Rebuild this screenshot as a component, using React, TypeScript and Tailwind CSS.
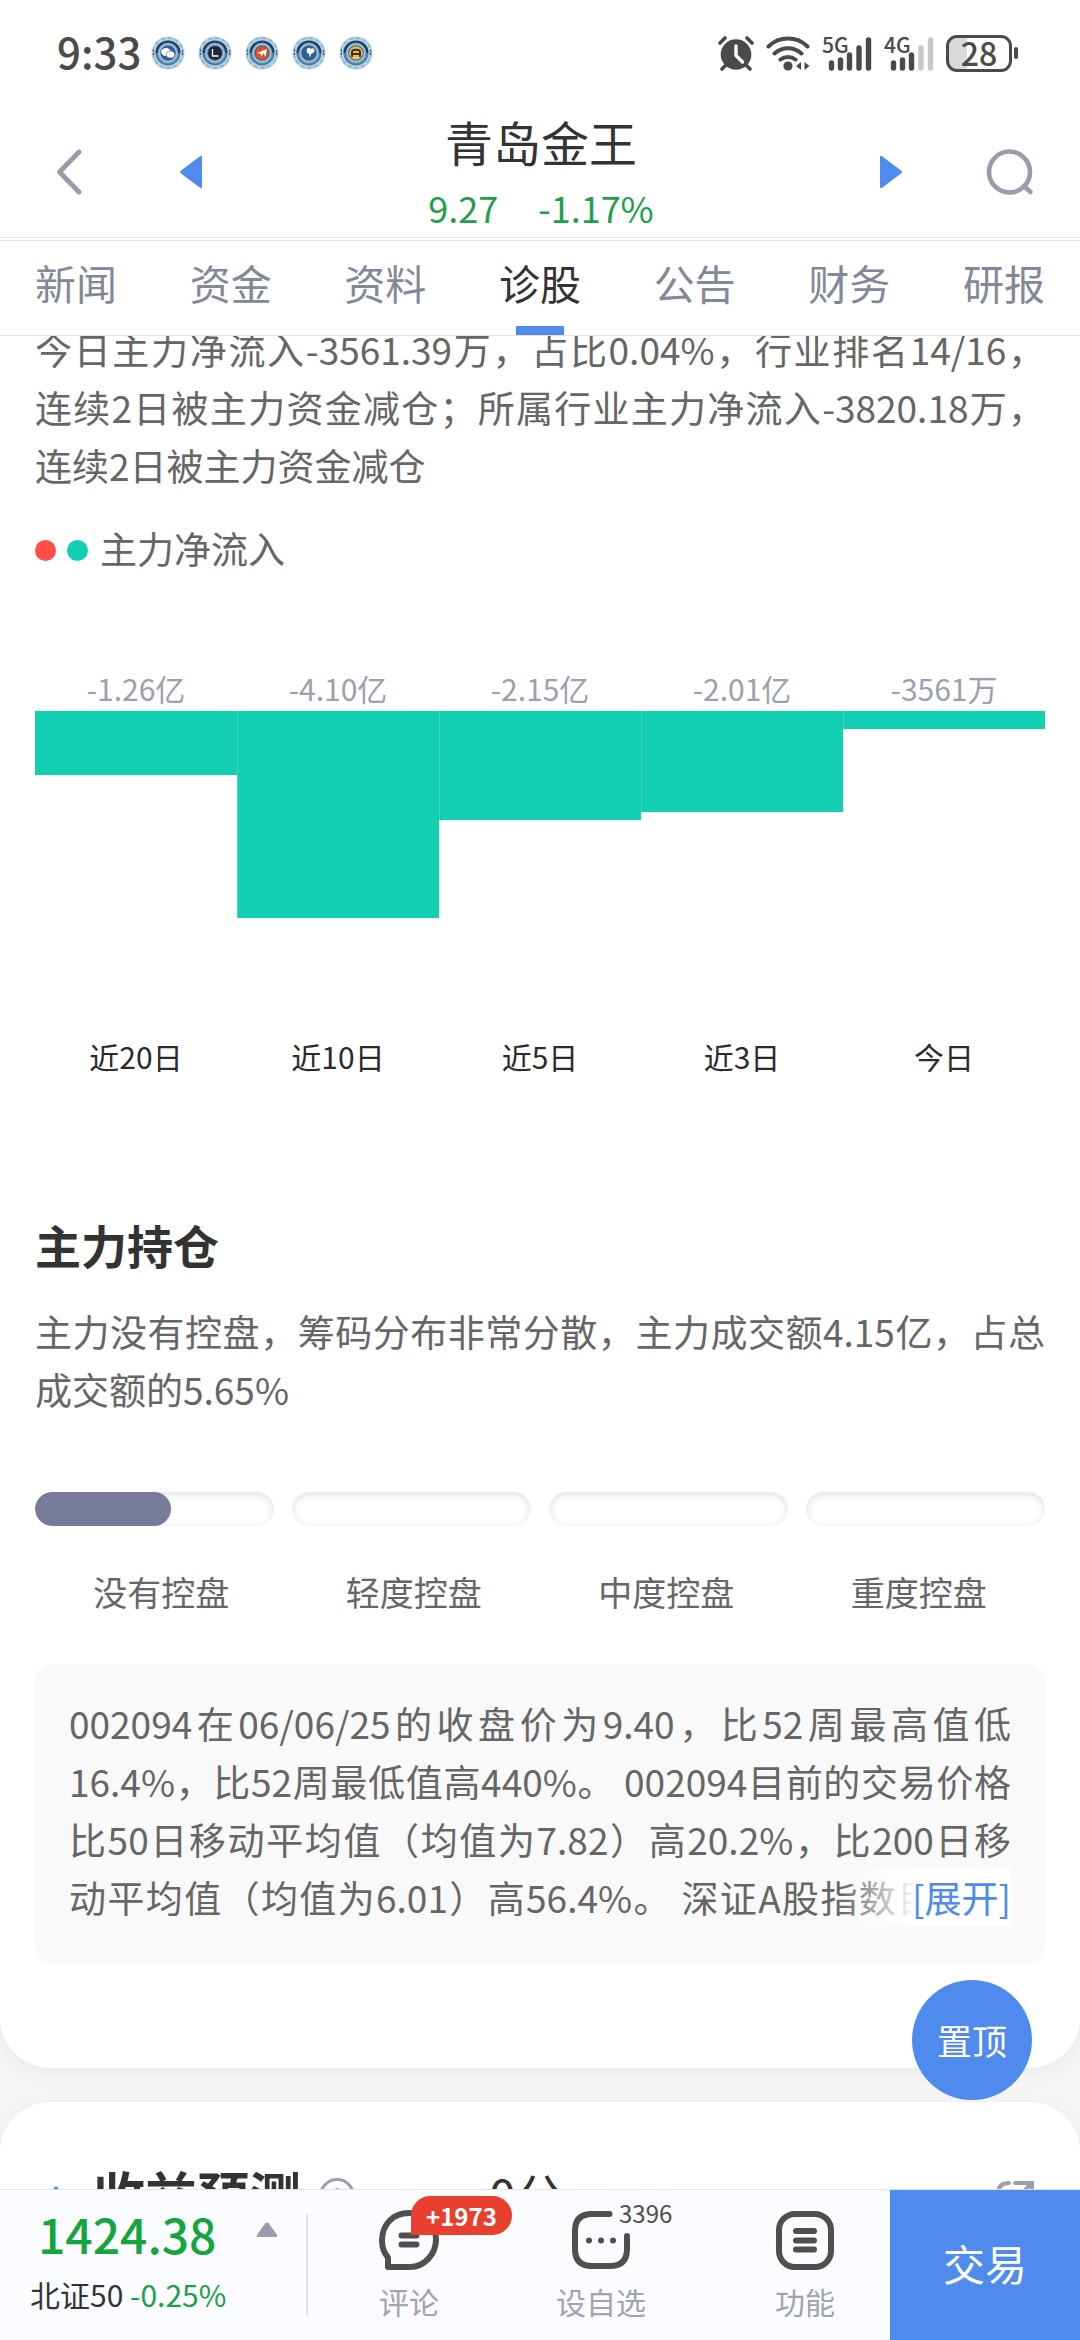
import React from 'react';

interface Flow {
  label: string;
  value: number;
  text: string;
}

const TABS = ['新闻', '资金', '资料', '诊股', '公告', '财务', '研报'];
const ACTIVE_TAB = '诊股';

// 单位：亿
const FLOWS: Flow[] = [
  { label: '近20日', value: -1.26, text: '-1.26亿' },
  { label: '近10日', value: -4.1, text: '-4.10亿' },
  { label: '近5日', value: -2.15, text: '-2.15亿' },
  { label: '近3日', value: -2.01, text: '-2.01亿' },
  { label: '今日', value: -0.3561, text: '-3561万' },
];
const BAR_MAX = 207;

const LEVELS = [
  { label: '没有控盘', percent: 57 },
  { label: '轻度控盘', percent: 0 },
  { label: '中度控盘', percent: 0 },
  { label: '重度控盘', percent: 0 },
];

const AppBadge: React.FC<{ core: string; children: React.ReactNode }> = ({ core, children }) => (
  <svg viewBox="0 0 34 34" className="size-[34px]">
    <circle cx="17" cy="17" r="16.5" fill="#b4d3e1" />
    <circle cx="17" cy="17" r="15" fill="none" stroke="#8bb2c8" strokeWidth="1.5" strokeDasharray="4 3" />
    <circle cx="17" cy="17" r="12" fill="#7ba5c2" />
    <path d="M5.500 17a11.500 11.500 0 0 1 23 0" fill="none" stroke="#1d3b63" strokeWidth="2.200" />
    <path d="M5.500 17a11.500 11.500 0 0 0 23 0" fill="none" stroke="#4d7ba3" strokeWidth="2" />
    <path d="M2.500 14v5M31.500 14v5" stroke="#1d3557" strokeWidth="1.200" strokeDasharray="1.500 1.500" />
    <circle cx="17" cy="17" r="8.500" fill="#365f8c" stroke="#a5c4d8" strokeWidth="1.500" />
    <circle cx="17" cy="17" r="6.800" fill={core} />
    {children}
  </svg>
);

const StatusBar = () => (
  <div className="flex h-[106px] items-center justify-between pr-[62px] pl-[57px] text-[#4a4a4a]">
    <div className="flex items-center gap-[10px]">
      <span className="pb-1 text-[42px] leading-[50px] font-medium">9:33</span>
      <div className="flex gap-[13px]">
        <AppBadge core="#2c5f94">
          <ellipse cx="15" cy="16" rx="4.800" ry="4" fill="#fff" />
          <ellipse cx="19.500" cy="18.500" rx="4.200" ry="3.500" fill="#fff" stroke="#2c5f94" strokeWidth="0.600" />
        </AppBadge>
        <AppBadge core="#22283a">
          <path d="M14.500 13v7h6" fill="none" stroke="#fff" strokeWidth="1.300" />
        </AppBadge>
        <AppBadge core="#dd4f22">
          <path d="M12 17l10-4-1.500 8-2-4-2.500 4v-3z" fill="#fff" />
        </AppBadge>
        <AppBadge core="#2c5f94">
          <path d="M15 13c1-2 2.500-1 3.500 0 1-1.500 4-1 4 1.500 0 2-2 3-3.500 3.500L18 22l-1-4c-2-.5-3-3-2-5z" fill="#fff" />
        </AppBadge>
        <AppBadge core="#f0bd45">
          <path d="M13 21v-5c0-3 8-3 8 0v5M12 18h10" fill="none" stroke="#33291a" strokeWidth="1.800" />
        </AppBadge>
      </div>
    </div>
    <div className="flex items-center gap-3">
      <svg viewBox="0 0 36 36" className="size-9">
        <circle cx="18" cy="19.500" r="15.300" fill="currentColor" />
        <path d="M2 8l5-5M34 8l-5-5M8 30l-4 4M28 30l4 4" stroke="currentColor" strokeWidth="3.600" strokeLinecap="round" />
        <path d="M18 11v9.500l6.500 6.500" fill="none" stroke="#fff" strokeWidth="3.400" strokeLinecap="round" strokeLinejoin="round" />
      </svg>
      <svg viewBox="0 0 44 36" className="h-9 w-11">
        <path d="M2.500 11.500a28 28 0 0 1 39 0M8.500 18.500a20 20 0 0 1 27 0M14.500 24.500a12.500 12.500 0 0 1 15 0" fill="none" stroke="currentColor" strokeWidth="4" strokeLinecap="round" />
        <circle cx="22" cy="31" r="4.600" fill="currentColor" />
        <path d="M35 27v8l-5-4zM38.500 27v8l5-4z" fill="currentColor" />
      </svg>
      <div className="relative h-9 w-[50px]">
        <span className="absolute -top-px left-0 text-[21px] leading-[20px] font-medium">5G</span>
        <svg viewBox="0 0 50 36" className="size-full">
          <path d="M9.500 28v5M18.500 25v8M27.500 20v13M37 13v20M46.500 5v28" stroke="currentColor" strokeWidth="5.400" strokeLinecap="round" />
        </svg>
      </div>
      <div className="relative h-9 w-[50px]">
        <span className="absolute -top-px left-0 text-[21px] leading-[20px] font-medium">4G</span>
        <svg viewBox="0 0 50 36" className="size-full">
          <path d="M9.500 28v5M18.500 25v8M27.500 20v13" stroke="currentColor" strokeWidth="5.400" strokeLinecap="round" />
          <path d="M37 13v20M46.500 5v28" stroke="#c8c8c8" strokeWidth="5.400" strokeLinecap="round" />
        </svg>
      </div>
      <div className="flex items-center gap-[2px]">
        <div className="flex h-[37px] w-[66px] items-center justify-center rounded-[11px] border-[3px] border-[#4a4a4a] bg-linear-to-r from-[#d9d9d9] from-30% to-white to-30% pb-[3px] text-[32px] leading-[32px] font-medium">
          28
        </div>
        <div className="h-3 w-1 rounded-sm bg-[#4a4a4a]" />
      </div>
    </div>
  </div>
);

const StockHeader = () => (
  <div className="flex h-[131px] items-center justify-between pr-[46px] pl-[53px]">
    <div className="flex items-center gap-[96px]">
      <button aria-label="返回">
        <svg viewBox="0 0 30 48" className="h-12 w-[30px]" fill="none" stroke="#9b9ca9" strokeWidth="5" strokeLinecap="round" strokeLinejoin="round">
          <path d="M26 4L6.500 24 26 44" />
        </svg>
      </button>
      <button aria-label="上一只">
        <svg viewBox="0 0 24 34" className="h-[34px] w-6" fill="#4f8bec">
          <path d="M21 1.200Q23 0 23 2.500v29Q23 34 21 32.800L2 18.500Q0 17 2 15.500z" />
        </svg>
      </button>
    </div>
    <div className="flex flex-col items-center gap-4 pb-[2px]">
      <h1 className="text-[48px] leading-[56px] text-[#333]">青岛金王</h1>
      <p className="flex gap-10 text-[36px] leading-[44px] text-[#1ea04a]">
        <span>9.27</span>
        <span>-1.17%</span>
      </p>
    </div>
    <div className="flex items-center gap-[83px]">
      <button aria-label="下一只">
        <svg viewBox="0 0 24 34" className="h-[34px] w-6" fill="#4f8bec">
          <path d="M3 1.200Q1 0 1 2.500v29Q1 34 3 32.800L22 18.500Q24 17 22 15.500z" />
        </svg>
      </button>
      <button aria-label="搜索">
        <svg viewBox="0 0 48 48" className="size-12" fill="none" stroke="#9b9ca9" strokeWidth="4.600">
          <circle cx="23.500" cy="24" r="20.500" />
          <path d="M38 38l6.500 6" strokeLinecap="round" />
        </svg>
      </button>
    </div>
  </div>
);

const TabBar = () => (
  <nav className="flex h-24 justify-between border-y border-[#e4e4e6] px-[35px]">
    {TABS.map((tab) => (
      <button
        key={tab}
        className={`relative pb-3 text-[41px] leading-[60px] ${tab === ACTIVE_TAB ? 'text-[#333]' : 'text-[#838898]'}`}
      >
        {tab}
        {tab === ACTIVE_TAB && <span className="absolute bottom-0 left-1/2 h-[9px] w-12 -translate-x-1/2 bg-[#4f8bec]" />}
      </button>
    ))}
  </nav>
);

const FlowChart = () => (
  <div className="mt-[91px] flex">
    {FLOWS.map((flow, i) => (
      <div key={flow.label} className="flex-1 text-center text-[30px] leading-10">
        <div className="pb-[3px] text-[#9b9fae]">{flow.text}</div>
        <div className="h-[325px]">
          <div
            className={i > 0 ? 'border-l border-[#3ad8bf] bg-[#12d0b1]' : 'bg-[#12d0b1]'}
            style={{ height: Math.round((Math.abs(flow.value) / 4.1) * BAR_MAX) }}
          />
        </div>
        <div className="text-[#2b2b2b]">{flow.label}</div>
      </div>
    ))}
  </div>
);

const ControlLevels = () => (
  <>
    <div className="mt-[74px] grid grid-cols-4 gap-[18px]">
      {LEVELS.map((level) => (
        <div key={level.label} className="h-[34px] overflow-hidden rounded-full bg-white shadow-[inset_0_2px_8px_rgba(0,0,0,0.13)]">
          <div className="h-full rounded-full bg-[#757b98]" style={{ width: `${level.percent}%` }} />
        </div>
      ))}
    </div>
    <div className="mt-[42px] grid grid-cols-4 text-center text-[34px] leading-[48px] text-[#666]">
      {LEVELS.map((level) => (
        <span key={level.label}>{level.label}</span>
      ))}
    </div>
  </>
);

const BottomBar = () => (
  <footer className="flex h-[151px] shrink-0 border-t border-[#dfe2e8] bg-[#fbfcff]">
    <div className="my-6 flex w-[308px] flex-col justify-between border-r-2 border-[#e3e4ea] pl-[30px]">
      <div className="flex items-start gap-10 pl-2">
        <span className="text-[48px] leading-[38px] font-medium text-[#14a53e]">1424.38</span>
        <svg viewBox="0 0 22 16" className="mt-2 h-4 w-[22px]" fill="#9b9bab">
          <path d="M9.500 1.200q1.500-1.500 3 0l8.500 11.500q1 2.300-1 2.300H2q-2 0-1-2.300z" />
        </svg>
      </div>
      <p className="text-[30px] leading-[44px] text-[#333]">
        北证50 <span className="text-[#1ea04a]">-0.25%</span>
      </p>
    </div>
    <div className="grid flex-1 grid-cols-[202fr_182fr_198fr] pt-5 text-[30px] leading-[38px] text-[#a0a3b0]">
      <button className="flex flex-col items-center gap-3">
        <span className="relative">
          <svg viewBox="0 0 60 60" className="size-[60px]" fill="none" stroke="#4f4f4f" strokeWidth="6" strokeLinejoin="round">
            <path d="M9 57V47.500C5 43 3 37 3 30.500 3 14.500 14 3 30 3s27 11.500 27 26.500S45 57 31 57z" />
            <path d="M22.500 25.500h15M22.500 34.500h15" strokeLinecap="round" />
          </svg>
          <span className="absolute -top-[14px] left-8 rounded-t-full rounded-r-full rounded-bl-none bg-[#e93f2e] px-[15px] text-[24px] leading-[39px] font-bold text-white">
            +1973
          </span>
        </span>
        评论
      </button>
      <button className="flex flex-col items-center gap-3">
        <span className="relative">
          <svg viewBox="0 0 60 60" className="size-[60px]" fill="none" stroke="#4f4f4f" strokeWidth="6" strokeLinecap="round">
            <path d="M38.500 4H21Q4 4 4 21v18q0 17 17 17h18q17 0 17-17V26" />
            <path d="M18 30.500h.01M30 30.500h.01M42 30.500h.01" />
          </svg>
          <span className="absolute -top-[9px] left-12 text-[24px] leading-[24px] text-[#4f4f4f]">3396</span>
        </span>
        设自选
      </button>
      <button className="flex flex-col items-center gap-3 pl-7">
        <svg viewBox="0 0 60 60" className="size-[60px]" fill="none" stroke="#4f4f4f" strokeWidth="6" strokeLinecap="round">
          <rect x="4" y="4" width="52" height="53" rx="16" />
          <path d="M21 21h18M21 30.500h18M21 39.500h18" />
        </svg>
        功能
      </button>
    </div>
    <button className="w-[190px] bg-[#4f8bec] pb-[6px] text-[42px] text-white">交易</button>
  </footer>
);

export default function App() {
  return (
    <div lang="zh-CN" className="flex h-screen flex-col bg-white font-['Noto_Sans_CJK_SC',sans-serif]">
      <header className="shrink-0">
        <StatusBar />
        <StockHeader />
        <div className="h-[3px] border-t border-[#e4e4e6]" />
        <TabBar />
      </header>

      <main className="flex-1 overflow-y-auto bg-[#f6f6f6] [scrollbar-width:none]">
        <section className="flow-root rounded-b-[50px] bg-white px-[35px] pb-[104px] shadow-[0_4px_20px_rgba(0,0,0,0.06)]">
          <p className="-mt-4 text-justify text-[37px] leading-[58px] text-[#666]">
            今日主力净流入-3561.39万，占比0.04%，行业排名14/16，连续2日被主力资金减仓；所属行业主力净流入-3820.18万，连续2日被主力资金减仓
          </p>

          <div className="mt-[25px] flex items-center text-[37px] leading-[58px] text-[#666]">
            <span className="mt-1 mr-[11px] size-[21px] rounded-full bg-[#ff4e47]" />
            <span className="mt-1 mr-3 size-[21px] rounded-full bg-[#12d0b1]" />
            主力净流入
          </div>
          <FlowChart />

          <h2 className="mt-[138px] text-[46px] leading-[60px] font-bold text-[#333]">主力持仓</h2>
          <p className="mt-7 text-justify text-[37px] leading-[58px] text-[#666]">
            主力没有控盘，筹码分布非常分散，主力成交额4.15亿，占总成交额的5.65%
          </p>
          <ControlLevels />

          <div className="mt-12 rounded-[18px] bg-[#f9f9f9] px-[34px] pt-[30px] pb-[38px]">
            <div className="relative">
              <p className="text-justify text-[37px] leading-[58px] text-[#666] [text-align-last:justify]">
                002094在06/06/25的收盘价为9.40，比52周最高值低16.4%，比52周最低值高440%。 002094目前的交易价格比50日移动平均值（均值为7.82）高20.2%，比200日移动平均值（均值为6.01）高56.4%。 深证A股指数目前的
              </p>
              <button className="absolute right-0 bottom-0 bg-linear-to-r from-white/0 to-white to-45% pl-[72px] text-[37px] leading-[58px] text-[#4f8bec]">
                [展开]
              </button>
            </div>
          </div>
        </section>

        <section className="mt-[34px] flex items-center rounded-t-[50px] bg-white px-[45px] pt-[60px] pb-10 shadow-[0_4px_20px_rgba(0,0,0,0.06)]">
          <svg viewBox="0 0 22 22" className="mt-1 mr-[26px] size-[22px]" fill="#4f8bec">
            <path d="M11 1l10 10-10 10L1 11z" />
          </svg>
          <h2 className="text-[52px] leading-[64px] font-bold text-[#333]">收益预测</h2>
          <svg viewBox="0 0 36 36" className="mt-1 ml-[18px] size-9" fill="none" stroke="#9b9fae" strokeWidth="3">
            <circle cx="18" cy="18" r="16.500" />
            <path d="M18 10v3M18 16v11" />
          </svg>
          <span className="ml-[134px] text-[48px] leading-[64px] text-[#333]">0分</span>
          <svg viewBox="0 0 40 40" className="mt-3 ml-auto size-10" fill="none" stroke="#9b9fae" strokeWidth="4" strokeLinecap="round">
            <path d="M14 3Q3 3 3 14v12q0 11 11 11h12q11 0 11-11v-5M20 3h17v16M37 3L20 20" />
          </svg>
        </section>
      </main>

      <BottomBar />

      <button className="fixed right-12 bottom-[240px] size-[120px] rounded-full bg-[#4f8bec] text-[35px] text-white">置顶</button>
    </div>
  );
}
